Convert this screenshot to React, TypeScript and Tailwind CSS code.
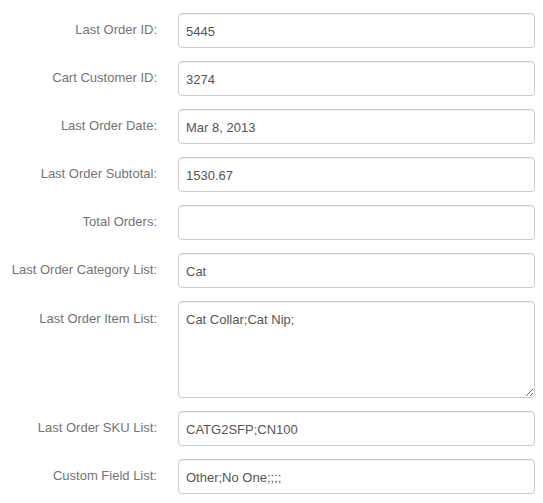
import React from "react";

const rows: { label: string; value: string; area?: boolean }[] = [
  { label: "Last Order ID:", value: "5445" },
  { label: "Cart Customer ID:", value: "3274" },
  { label: "Last Order Date:", value: "Mar 8, 2013" },
  { label: "Last Order Subtotal:", value: "1530.67" },
  { label: "Total Orders:", value: "" },
  { label: "Last Order Category List:", value: "Cat" },
  { label: "Last Order Item List:", value: "Cat Collar;Cat Nip;", area: true },
  { label: "Last Order SKU List:", value: "CATG2SFP;CN100" },
  { label: "Custom Field List:", value: "Other;No One;;;;" },
];

export default function App() {
  return (
    <div
      className="w-[543px] h-[503px] bg-white pt-[13px] overflow-hidden"
      style={{ fontFamily: '"Liberation Sans", Arial, sans-serif' }}
    >
      {rows.map((r) => (
        <div key={r.label} className="flex items-start mb-[13px]">
          <div
            className={`w-[157px] shrink-0 text-right text-[13px] text-[#737373] leading-[18px] ${
              r.area ? "pt-[9px]" : "pt-[8px]"
            }`}
          >
            {r.label}
          </div>
          <div className="ml-[21px] w-[357px]">
            {r.area ? (
              <textarea
                readOnly
                defaultValue={r.value}
                className="block w-full h-[97px] border border-[#ccc] rounded-[4px] shadow-[inset_0_1px_1px_rgba(0,0,0,0.075)] px-[7px] pt-[9px] pb-[8px] text-[13px] leading-[18px] text-[#555] bg-white outline-none resize-y"
              />
            ) : (
              <input
                readOnly
                defaultValue={r.value}
                className="block w-full h-[35px] border border-[#ccc] rounded-[4px] shadow-[inset_0_1px_1px_rgba(0,0,0,0.075)] px-[7px] pt-[2px] text-[13px] text-[#555] bg-white outline-none"
              />
            )}
          </div>
        </div>
      ))}
    </div>
  );
}
